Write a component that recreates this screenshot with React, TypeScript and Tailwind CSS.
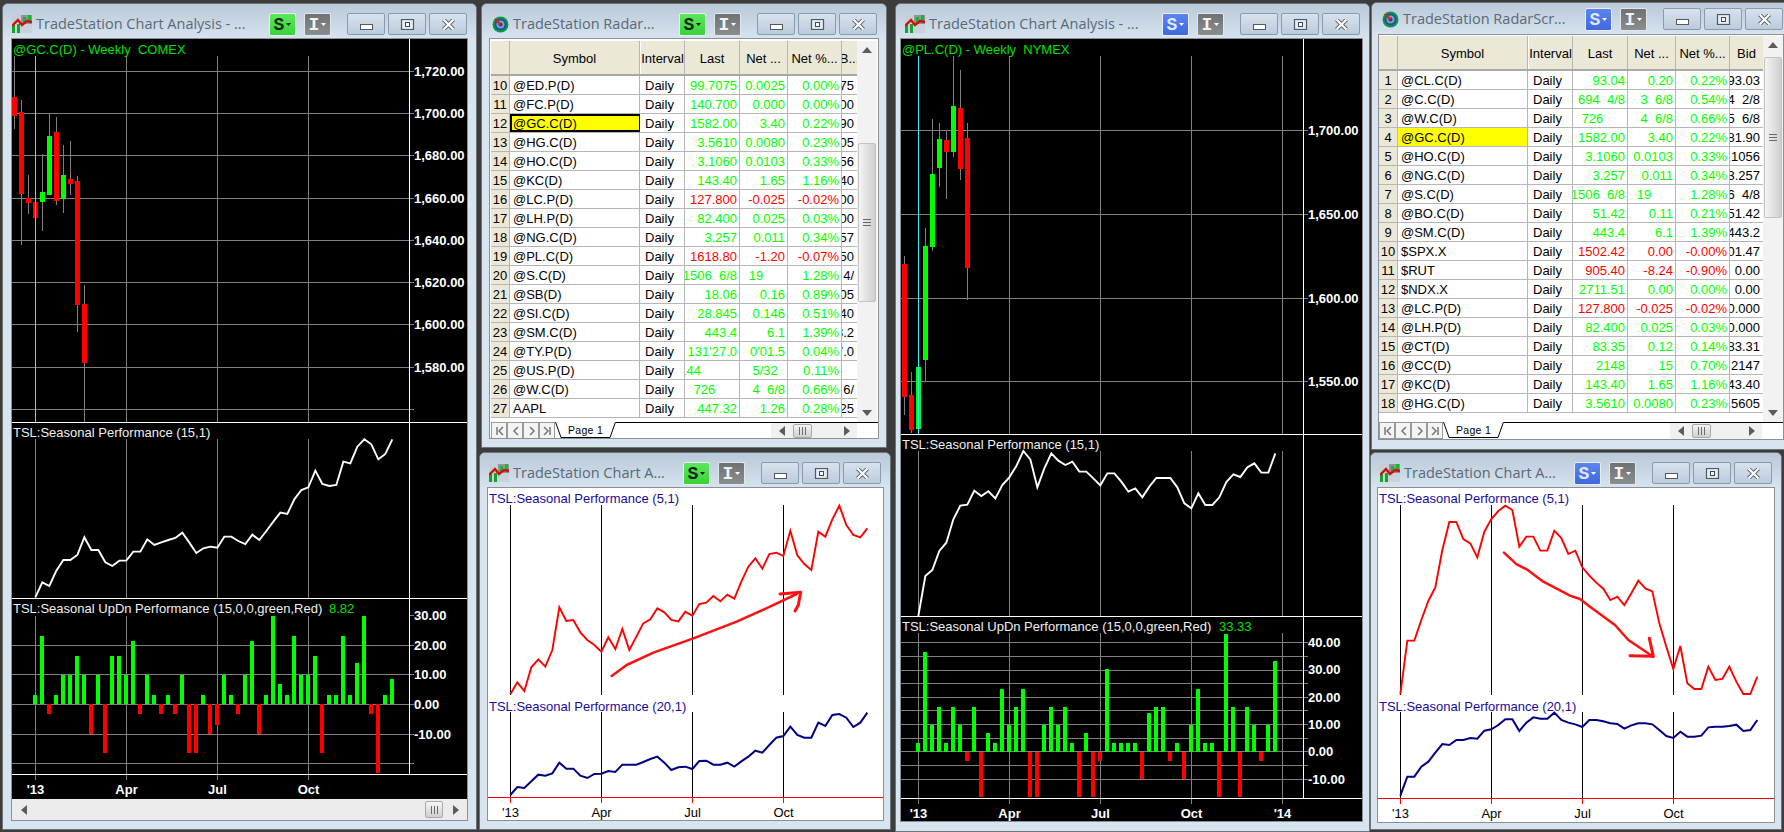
import React from 'react';

type Row = [string, string, string, string, string, string];
type Candle = [number, number, number, number, number, 'r' | 'g'];

const series = (ys: number[], start: number, ox: number, oy: number) =>
  ys.map((y, i) => `${ox + (start + i * 21) / 3},${oy + y / 3}`).join(' ');
const pts = (p: number[][], ox: number, oy: number) => p.map(([x, y]) => `${ox + x / 3},${oy + y / 3}`).join(' ');

const GRID = '#808080';

function ChartIcon() {
  return (
    <svg width="20" height="18" viewBox="0 0 20 18" className="shrink-0">
      <rect x="0" y="0" width="20" height="18" fill="#c4ccd0" opacity="0.6" />
      <rect x="9" y="0" width="11" height="9" fill="#8f9496" />
      <rect x="0" y="10" width="3" height="8" fill="#11a52a" />
      <rect x="5" y="9" width="3" height="9" fill="#11a52a" />
      <rect x="11" y="2" width="3" height="7" fill="#18b535" />
      <rect x="16" y="0" width="3" height="8" fill="#18b535" />
      <polyline points="0,11 6,5 10,10 15,6 20,7" fill="none" stroke="#d01010" strokeWidth="2.4" />
    </svg>
  );
}

function RadarIcon() {
  return (
    <svg width="17" height="17" viewBox="0 0 17 17" className="ml-[1px] shrink-0">
      <circle cx="8.5" cy="8.5" r="8" fill="#0f9a3a" />
      <circle cx="8.5" cy="8.5" r="6" fill="#1a4fb0" />
      <circle cx="8.5" cy="8.5" r="4" fill="#7f9fb8" />
      <circle cx="8.5" cy="8.5" r="2" fill="#24406f" />
      <line x1="3" y1="3" x2="9" y2="9" stroke="#d82020" strokeWidth="2" />
    </svg>
  );
}

function TitleButtons({ s }: { s: 'green' | 'blue' }) {
  return (
    <div className="flex items-start shrink-0">
      <div
        className={
          'flex h-[23px] w-[27px] items-center justify-center gap-[2px] rounded-[2px] border border-[#e8eef4] ' +
          (s === 'green'
            ? 'bg-linear-to-b from-[#5ae85a] to-[#36d436] text-[#16261a]'
            : 'bg-linear-to-b from-[#5b86ee] to-[#3f68e0] text-[#dfe8ff]')
        }
      >
        <span className="font-['Liberation_Mono'] text-[18px] font-bold leading-none">S</span>
        <svg width="5" height="3" viewBox="0 0 5 3"><polygon points="0,0 5,0 2.5,3" fill={s === 'green' ? '#102010' : '#ffffff'} /></svg>
      </div>
      <div className="ml-[8px] flex h-[23px] w-[27px] items-center justify-center gap-[2px] rounded-[2px] border border-[#e0e6ec] bg-linear-to-b from-[#6f7272] to-[#8b8e8e] text-[#f2f2f2]">
        <span className="font-['Liberation_Mono'] text-[18px] font-bold leading-none">I</span>
        <svg width="5" height="3" viewBox="0 0 5 3"><polygon points="0,0 5,0 2.5,3" fill="#ffffff" /></svg>
      </div>
      <div className="ml-[16px] flex gap-[3px]">
        <WinBtn>
          <rect x="1.5" y="5.5" width="12" height="5" fill="#fff" stroke="#4e5a66" />
        </WinBtn>
        <WinBtn>
          <rect x="1.5" y="0.5" width="12" height="10" fill="#e4ecf4" stroke="#4e5a66" strokeWidth="1.2" />
          <rect x="5.5" y="3.5" width="4" height="4" fill="#fff" stroke="#3e4a56" strokeWidth="1" />
        </WinBtn>
        <WinBtn>
          <path d="M2.5 0.5 L12.5 10.5 M12.5 0.5 L2.5 10.5" stroke="#55606c" strokeWidth="4" />
          <path d="M2.5 0.5 L12.5 10.5 M12.5 0.5 L2.5 10.5" stroke="#ffffff" strokeWidth="2.2" />
        </WinBtn>
      </div>
    </div>
  );
}

function WinBtn({ children }: { children: React.ReactNode }) {
  return (
    <div className="flex h-[22px] w-[38px] items-center justify-center rounded-[2px] border border-[#8a9bb0] bg-linear-to-b from-[#d7e2ee] to-[#bccbdb]">
      <svg width="15" height="11" viewBox="0 0 15 11">{children}</svg>
    </div>
  );
}

function Win({
  pos,
  title,
  icon,
  s,
  bar = 'h-[34px] pt-[9px]',
  clientBox,
  children,
}: {
  pos: string;
  title: string;
  icon: React.ReactNode;
  s: 'green' | 'blue';
  bar?: string;
  clientBox: string;
  children: React.ReactNode;
}) {
  return (
    <div className={'absolute flex flex-col rounded-t-[6px] border border-[#6e7377] bg-[#d8e5f1] ' + pos}>
      <div className={'flex shrink-0 items-start rounded-t-[5px] bg-linear-to-b from-[#bac9d8] to-[#d6e3ef] pr-[9px] ' + bar}>
        <div className="flex min-w-0 flex-1 items-center gap-[4px] pl-[9px]">
          {icon}
          <span className="font-['Open_Sans'] whitespace-nowrap text-[14.5px] leading-[22px] text-[#5a6976]">{title}</span>
        </div>
        <TitleButtons s={s} />
      </div>
      <div className={'flex flex-col overflow-hidden border border-[#8b9097] ' + clientBox}>{children}</div>
    </div>
  );
}

function Candles({ data }: { data: Candle[] }) {
  return (
    <g shapeRendering="crispEdges">
      {data.map(([cx, wt, wb, bt, bb, c], i) => (
        <g key={i}>
          <rect x={Math.floor(cx)} y={wt} width="1" height={wb - wt} fill={GRID} />
          <rect x={Math.floor(cx) - 2} y={bt} width="5" height={bb - bt} fill={c === 'r' ? '#ff0000' : '#00ff00'} />
        </g>
      ))}
    </g>
  );
}

function Txt({ x, y, children, fill = '#fff', bold, anchor }: { x: number; y: number; children: React.ReactNode; fill?: string; bold?: boolean; anchor?: 'middle' }) {
  return (
    <text x={x} y={y + 4.5} fill={fill} fontSize="13" fontWeight={bold ? 700 : 400} textAnchor={anchor} xmlSpace="preserve">
      {children}
    </text>
  );
}

function DarkChart(p: {
  box: [number, number, number, number];
  axis: number;
  seps: [number, number, number];
  vx: number[];
  cyan: number;
  top2: number;
  top3: number;
  priceLines: number[];
  priceLabels: [string, number][];
  labelX: number;
  candles: Candle[];
  legend: string;
  line: string;
  legend2Y: number;
  legend3Y: number;
  valX: number;
  val: string;
  bars: number[];
  zero: number;
  bx: number;
  ox: number;
  oy: number;
  barLines: number[];
  barTicks: number[];
  barLabels: [string, number][];
  dates: [string, number][];
  dateY: number;
}) {
  const [x, y, w, h] = p.box;
  const [s1, s2, s3] = p.seps;
  return (
    <svg width={w} height={h} viewBox={`${x} ${y} ${w} ${h}`} className="block shrink-0 bg-black">
      <g shapeRendering="crispEdges" stroke={GRID} strokeWidth="1">
        {p.vx.map((v) => (
          <line key={'a' + v} x1={v} x2={v} y1={56} y2={s1} />
        ))}
        {p.vx.map((v) => (
          <line key={'b' + v} x1={v} x2={v} y1={p.top2} y2={s2} />
        ))}
        {p.vx.map((v) => (
          <line key={'c' + v} x1={v} x2={v} y1={p.top3} y2={s3 + 5} />
        ))}
        <line x1={p.cyan} x2={p.cyan} y1={p.top2} y2={s2} />
        <line x1={p.cyan} x2={p.cyan} y1={p.top3} y2={s3 + 5} />
        {p.priceLines.map((v) => (
          <line key={'p' + v} x1={x} x2={p.axis + 4} y1={v} y2={v} />
        ))}
        {p.barLines.map((v) => (
          <line key={'l' + v} x1={x} x2={p.axis + 4} y1={v} y2={v} />
        ))}
        {p.barTicks.map((v) => (
          <line key={'t' + v} x1={p.axis} x2={p.axis + 4} y1={v} y2={v} />
        ))}
      </g>
      <Candles data={p.candles} />
      <line x1={p.cyan} x2={p.cyan} y1={56} y2={s1} stroke="#30f0f8" strokeWidth="1" shapeRendering="crispEdges" />
      <polyline points={p.line} fill="none" stroke="#ffffff" strokeWidth="1.9" />
      <g shapeRendering="crispEdges">
        {p.bars.map((b, i) => {
          const bx = p.ox + (p.bx + i * 21) / 3 - 2;
          const a = p.oy + p.zero / 3;
          const e = p.oy + b / 3;
          return <rect key={i} x={Math.round(bx)} y={Math.min(a, e)} width="4" height={Math.abs(a - e)} fill={b < p.zero ? '#00ff00' : '#ff0000'} />;
        })}
      </g>
      <g shapeRendering="crispEdges" stroke="#ffffff" strokeWidth="1">
        <line x1={p.axis} x2={p.axis} y1={y} y2={s3} />
        <line x1={x} x2={x + w} y1={s1} y2={s1} />
        <line x1={x} x2={x + w} y1={s2} y2={s2} />
        <line x1={x} x2={x + w} y1={s3} y2={s3} />
      </g>
      <Txt x={x + 1} y={49} fill="#00e000">{p.legend}</Txt>
      <Txt x={x + 1} y={p.legend2Y} fill="#f0f0f0">TSL:Seasonal Performance (15,1)</Txt>
      <Txt x={x + 1} y={p.legend3Y} fill="#f0f0f0">TSL:Seasonal UpDn Performance (15,0,0,green,Red)</Txt>
      <Txt x={p.valX} y={p.legend3Y} fill="#00e000">{p.val}</Txt>
      {p.priceLabels.map(([t, v]) => (
        <Txt key={t} x={p.labelX} y={v} bold>{t}</Txt>
      ))}
      {p.barLabels.map(([t, v]) => (
        <Txt key={t} x={p.labelX} y={v} bold>{t}</Txt>
      ))}
      {p.dates.map(([t, v]) => (
        <Txt key={t} x={v} y={p.dateY} bold anchor="middle">{t}</Txt>
      ))}
    </svg>
  );
}

function WhiteChart(p: {
  box: [number, number, number, number];
  ox: number;
  oy: number;
  red: number[];
  blue: number[];
  arrow: number[][];
  head: number[][];
  hline: number;
  dateY: number;
}) {
  const [x, y, w, h] = p.box;
  const vx = [91, 364, 637, 910].map((v) => Math.floor(p.ox + v / 3) + 0.5);
  const names = ["'13", 'Apr', 'Jul', 'Oct'];
  const base = p.oy;
  return (
    <svg width={w} height={h} viewBox={`${x} ${y} ${w} ${h}`} className="block bg-white">
      <g shapeRendering="crispEdges" stroke="#000" strokeWidth="1">
        {vx.map((v) => (
          <line key={'a' + v} x1={v} x2={v} y1={base + 55} y2={base + 245} />
        ))}
        {vx.map((v) => (
          <line key={'b' + v} x1={v} x2={v} y1={base + 262} y2={p.hline} />
        ))}
      </g>
      <g shapeRendering="crispEdges" stroke="#ff0000" strokeWidth="1">
        <line x1={x} x2={x + w} y1={p.hline} y2={p.hline} />
        {vx.map((v) => (
          <line key={'c' + v} x1={v} x2={v} y1={p.hline} y2={p.hline + 5} />
        ))}
      </g>
      <polyline points={series(p.red, 91, p.ox, p.oy)} fill="none" stroke="#ff0000" strokeWidth="1.9" />
      <polyline points={series(p.blue, 91, p.ox, p.oy)} fill="none" stroke="#000080" strokeWidth="2" />
      <polyline points={pts(p.arrow, p.ox, p.oy)} fill="none" stroke="#ff1010" strokeWidth="2.5" strokeLinejoin="round" strokeLinecap="round" />
      <polyline points={pts(p.head, p.ox, p.oy)} fill="none" stroke="#ff1010" strokeWidth="3" strokeLinejoin="round" strokeLinecap="round" />
      <Txt x={x + 1} y={base + 48} fill="#1a0a9a">TSL:Seasonal Performance (5,1)</Txt>
      <Txt x={x + 1} y={base + 256} fill="#1a0a9a">TSL:Seasonal Performance (20,1)</Txt>
      {names.map((t, i) => (
        <Txt key={t} x={vx[i]} y={p.dateY} fill="#000" anchor="middle">{t}</Txt>
      ))}
    </svg>
  );
}

const cell = 'flex h-full shrink-0 items-center overflow-hidden whitespace-pre border-r border-[#b6b6b6] pt-[1px]';

function Grid({ rows, lastHead, lastW, selBorder }: { rows: Row[]; lastHead: string; lastW: string; selBorder?: boolean }) {
  return (
    <div className={'flex flex-col text-[13px] leading-none text-black ' + lastW}>
      <div className="flex h-[35px] shrink-0 border-b-2 border-[#a8a8a8] bg-[#ebe8d8]">
        <div className={cell + ' w-[19px]'} />
        <div className={cell + ' w-[130px] justify-center'}>Symbol</div>
        <div className={cell + ' w-[45px] justify-center border-l border-l-white'}>Interval</div>
        <div className={cell + ' w-[55px] justify-center'}>Last</div>
        <div className={cell + ' w-[48px] justify-center'}>Net ...</div>
        <div className={cell + ' w-[54px] justify-center'}>Net %...</div>
        <div className="flex min-w-0 flex-1 items-center justify-center overflow-hidden whitespace-pre pt-[1px]">{lastHead}</div>
      </div>
      {rows.map((r) => {
        const col = r[4].startsWith('-') ? 'text-[#ff0000]' : 'text-[#00ff00]';
        const selected = r[1] === '@GC.C(D)';
        const bordered = selected && selBorder;
        return (
          <div key={r[0]} className="flex h-[19px] shrink-0 border-b border-[#b6b6b6]">
            <div className={cell + ' w-[19px] justify-center bg-[#ebe8d8]'}>{r[0]}</div>
            <div
              className={
                cell +
                ' w-[130px] ' +
                (selected ? 'bg-[#ffff00] ' : '') +
                (bordered ? 'border-2 border-black pl-[1px]' : 'pl-[3px]')
              }
            >
              {r[1]}
            </div>
            <div className={cell + ' w-[45px] pl-[5px]'}>Daily</div>
            <div className={cell + ' w-[55px] justify-end pr-[2px] ' + col}><span className="shrink-0">{r[2]}</span></div>
            <div className={cell + ' w-[48px] justify-end pr-[2px] ' + col}><span className="shrink-0">{r[3]}</span></div>
            <div className={cell + ' w-[54px] justify-end pr-[2px] ' + col}><span className="shrink-0">{r[4]}</span></div>
            <div className="flex min-w-0 flex-1 items-center justify-end overflow-hidden whitespace-pre pr-[3px] pt-[1px]"><span className="shrink-0">{r[5]}</span></div>
          </div>
        );
      })}
    </div>
  );
}

function Tri({ d }: { d: 'u' | 'd' | 'l' | 'r' }) {
  const p = { u: '0,6 10,6 5,0', d: '0,0 10,0 5,6', l: '6,0 6,10 0,5', r: '0,0 0,10 6,5' }[d];
  const horizontal = d === 'l' || d === 'r';
  return (
    <svg width={horizontal ? 6 : 10} height={horizontal ? 10 : 6} viewBox={horizontal ? '0 0 6 10' : '0 0 10 6'} className="shrink-0">
      <polygon points={p} fill="#5c5c5c" />
    </svg>
  );
}

function Grip({ vertical }: { vertical?: boolean }) {
  return (
    <svg width={vertical ? 8 : 9} height={vertical ? 9 : 8} viewBox={vertical ? '0 0 8 9' : '0 0 9 8'}>
      {[0.5, 3.5, 6.5].map((v) =>
        vertical ? (
          <line key={v} x1="0" x2="8" y1={v + 1} y2={v + 1} stroke="#6a6a6a" />
        ) : (
          <line key={v} y1="0" y2="8" x1={v + 1} x2={v + 1} stroke="#6a6a6a" />
        ),
      )}
    </svg>
  );
}

function VScroll({ gap, thumb }: { gap: string; thumb: string }) {
  return (
    <div className="flex w-[20px] shrink-0 flex-col items-center bg-[#f2f2f2]">
      <div className="flex h-[18px] w-full shrink-0 items-center justify-center"><Tri d="u" /></div>
      <div className={'shrink-0 ' + gap} />
      <div className={'flex w-[18px] shrink-0 items-center justify-center rounded-[2px] border border-[#c2c2c2] bg-linear-to-r from-[#f4f4f4] to-[#cfcfcf] ' + thumb}>
        <Grip vertical />
      </div>
      <div className="flex-1" />
      <div className="flex h-[18px] w-full shrink-0 items-center justify-center"><Tri d="d" /></div>
    </div>
  );
}

function TabStrip({ scrollW }: { scrollW: string }) {
  return (
    <div className="flex h-[17px] shrink-0 bg-white">
      {['M4 2v8M10 2L6 6l4 4', 'M9 2L5 6l4 4', 'M5 2l4 4-4 4', 'M3 2l4 4-4 4M9 2v8'].map((d) => (
        <div key={d} className="flex h-full w-[16px] items-center justify-center border border-[#9a9a9a] bg-[#f4f4f4]">
          <svg width="12" height="12" viewBox="0 0 12 12"><path d={d} fill="none" stroke="#777" strokeWidth="1.5" /></svg>
        </div>
      ))}
      <div className="relative flex h-full w-[61px] shrink-0 items-center justify-center text-[10.5px] leading-none text-black">
        <svg width="61" height="17" viewBox="0 0 61 17" className="absolute left-0 top-0">
          <path d="M0.5 0 L6 15.5 H55 L60.5 0" fill="#fff" stroke="#000" />
        </svg>
        <span className="relative tracking-[0.3px]">Page 1</span>
      </div>
      <div className="flex-1 border-t border-black" />
      <div className={'flex h-full shrink-0 items-center border-t border-black bg-[#f0f0f0] pl-[8px] ' + scrollW}>
        <Tri d="l" />
        <div className="ml-[8px] flex h-[14px] w-[19px] items-center justify-center rounded-[2px] border border-[#aaa] bg-linear-to-b from-[#f6f6f6] to-[#cfcfcf]"><Grip /></div>
        <div className="flex-1" />
        <Tri d="r" />
        <div className="w-[7px]" />
      </div>
      <div className="w-[21px] shrink-0 border-t border-black bg-white" />
    </div>
  );
}

const rows2: Row[] = [
  ['10', '@ED.P(D)', '99.7075', '0.0025', '0.00%', '99.7075'],
  ['11', '@FC.P(D)', '140.700', '0.000', '0.00%', '140.700'],
  ['12', '@GC.C(D)', '1582.00', '3.40', '0.22%', '1581.90'],
  ['13', '@HG.C(D)', '3.5610', '0.0080', '0.23%', '3.5605'],
  ['14', '@HO.C(D)', '3.1060', '0.0103', '0.33%', '3.1056'],
  ['15', '@KC(D)', '143.40', '1.65', '1.16%', '143.40'],
  ['16', '@LC.P(D)', '127.800', '-0.025', '-0.02%', '127.800'],
  ['17', '@LH.P(D)', '82.400', '0.025', '0.03%', '82.000'],
  ['18', '@NG.C(D)', '3.257', '0.011', '0.34%', '3.257'],
  ['19', '@PL.C(D)', '1618.80', '-1.20', '-0.07%', '1618.50'],
  ['20', '@S.C(D)', '1506  6/8', '19      ', '1.28%', '1506 4/'],
  ['21', '@SB(D)', '18.06', '0.16', '0.89%', '18.05'],
  ['22', '@SI.C(D)', '28.845', '0.146', '0.51%', '28.840'],
  ['23', '@SM.C(D)', '443.4', '6.1', '1.39%', '443.2'],
  ['24', '@TY.P(D)', "131'27.0", "0'01.5", '0.04%', "131'27.0"],
  ['25', '@US.P(D)', '144          ', '5/32  ', '0.11%', ''],
  ['26', '@W.C(D)', '726      ', '4  6/8', '0.66%', '726 6/'],
  ['27', 'AAPL', '447.32', '1.26', '0.28%', '447.25'],
];

const rows5: Row[] = [
  ['1', '@CL.C(D)', '93.04', '0.20', '0.22%', '93.03'],
  ['2', '@C.C(D)', '694  4/8', '3  6/8', '0.54%', '694  2/8'],
  ['3', '@W.C(D)', '726      ', '4  6/8', '0.66%', '725  6/8'],
  ['4', '@GC.C(D)', '1582.00', '3.40', '0.22%', '1581.90'],
  ['5', '@HO.C(D)', '3.1060', '0.0103', '0.33%', '3.1056'],
  ['6', '@NG.C(D)', '3.257', '0.011', '0.34%', '3.257'],
  ['7', '@S.C(D)', '1506  6/8', '19      ', '1.28%', '1506  4/8'],
  ['8', '@BO.C(D)', '51.42', '0.11', '0.21%', '51.42'],
  ['9', '@SM.C(D)', '443.4', '6.1', '1.39%', '443.2'],
  ['10', '$SPX.X', '1502.42', '0.00', '-0.00%', '1501.47'],
  ['11', '$RUT', '905.40', '-8.24', '-0.90%', '0.00'],
  ['12', '$NDX.X', '2711.51', '0.00', '0.00%', '0.00'],
  ['13', '@LC.P(D)', '127.800', '-0.025', '-0.02%', '0.000'],
  ['14', '@LH.P(D)', '82.400', '0.025', '0.03%', '0.000'],
  ['15', '@CT(D)', '83.35', '0.12', '0.14%', '83.31'],
  ['16', '@CC(D)', '2148', '15', '0.70%', '2147'],
  ['17', '@KC(D)', '143.40', '1.65', '1.16%', '143.40'],
  ['18', '@HG.C(D)', '3.5610', '0.0080', '0.23%', '3.5605'],
];

const candles1: Candle[] = [
  [14.5, 56, 129, 97, 116, 'r'],
  [21.5, 100, 245, 112, 194, 'r'],
  [28.5, 175, 214, 198, 203, 'r'],
  [35.5, 192, 218, 202, 218, 'r'],
  [42.5, 154, 231, 192, 202, 'g'],
  [49.5, 114, 195, 136, 195, 'g'],
  [56.5, 117, 205, 132, 201, 'r'],
  [63.5, 145, 213, 175, 199, 'g'],
  [70.5, 141, 195, 179, 184, 'r'],
  [77.5, 176, 332, 181, 305, 'r'],
  [84.5, 285, 422, 304, 363, 'r'],
];
const line1 = [592, 547, 558, 512, 480, 480, 465, 412, 450, 450, 487, 498, 482, 482, 455, 455, 418, 435, 427, 420, 414, 398, 428, 459, 445, 440, 443, 410, 410, 423, 432, 404, 420, 393, 365, 338, 342, 298, 270, 262, 212, 252, 258, 255, 185, 190, 140, 118, 133, 178, 162, 118];
const bars1 = [885, 708, 942, 885, 825, 825, 768, 825, 1002, 825, 1058, 768, 768, 825, 723, 942, 825, 885, 942, 885, 942, 825, 1058, 1058, 885, 1002, 975, 825, 885, 942, 825, 723, 1002, 885, 648, 852, 885, 708, 825, 825, 768, 1058, 885, 885, 708, 885, 790, 648, 942, 1118, 885, 838];

const z4 = (v: number) => 895 + v / 3;
const t4 = (v: number) => v / 3;
const candles4: Candle[] = (
  [
    [29, 768, 1245, 792, 1190, 'r'],
    [50, 1115, 1298, 1186, 1290, 'r'],
    [71, 1100, 1290, 1101, 1287, 'g'],
    [92, 684, 1143, 738, 1080, 'g'],
    [113, 357, 753, 522, 741, 'g'],
    [134, 369, 561, 417, 504, 'g'],
    [155, 393, 597, 420, 456, 'r'],
    [176, 168, 471, 318, 456, 'g'],
    [197, 210, 540, 324, 507, 'r'],
    [218, 369, 900, 414, 804, 'r'],
  ] as [number, number, number, number, number, 'r' | 'g'][]
).map(([x, a, b, c, d, k]) => [z4(x), t4(a), t4(b), t4(c), t4(d), k] as Candle);
const line4 = [588, 468, 450, 393, 368, 298, 257, 254, 212, 228, 214, 235, 195, 172, 138, 93, 118, 202, 145, 100, 122, 135, 125, 155, 155, 175, 196, 160, 160, 185, 215, 205, 232, 200, 174, 174, 174, 202, 250, 265, 220, 255, 255, 232, 186, 163, 171, 142, 130, 158, 158, 100];
const bars4 = [968, 695, 914, 860, 968, 860, 914, 1023, 860, 1130, 938, 968, 806, 914, 860, 806, 1130, 1130, 914, 860, 914, 860, 968, 1130, 938, 1130, 1023, 748, 968, 968, 968, 968, 1077, 878, 860, 860, 1023, 968, 1077, 914, 806, 968, 968, 1130, 642, 860, 1130, 860, 914, 1023, 914, 723];

const red3 = [733, 697, 723, 652, 628, 650, 600, 472, 513, 510, 547, 570, 585, 605, 562, 597, 537, 600, 560, 520, 508, 475, 487, 510, 514, 485, 497, 462, 458, 438, 454, 434, 446, 395, 350, 325, 356, 312, 308, 318, 242, 316, 342, 360, 245, 260, 208, 167, 225, 255, 262, 235];
const blue3 = [1035, 1011, 1014, 994, 974, 977, 970, 938, 956, 956, 977, 984, 972, 971, 963, 966, 944, 944, 944, 936, 927, 920, 938, 960, 952, 950, 957, 933, 932, 944, 944, 938, 950, 934, 920, 902, 908, 885, 863, 858, 830, 855, 863, 863, 818, 828, 795, 792, 803, 831, 818, 788];
const red6 = [733, 572, 572, 510, 453, 412, 300, 216, 216, 267, 280, 322, 245, 207, 183, 167, 180, 290, 260, 260, 302, 302, 242, 264, 312, 302, 352, 377, 398, 416, 450, 440, 465, 430, 392, 415, 424, 520, 590, 657, 588, 700, 717, 717, 650, 690, 687, 650, 695, 732, 732, 680];
const blue6 = [1037, 980, 980, 950, 935, 908, 882, 885, 870, 870, 864, 866, 842, 838, 825, 808, 808, 843, 818, 802, 806, 806, 788, 810, 818, 823, 831, 810, 810, 814, 820, 822, 836, 826, 820, 820, 823, 840, 858, 864, 845, 860, 860, 857, 832, 830, 830, 828, 824, 843, 840, 810];

export default function App() {
  return (
    <div className="relative h-[832px] w-[1784px] overflow-hidden bg-[#3c3c3c] font-['Liberation_Sans',sans-serif]">
      <Win pos="left-[2px] top-[3px] h-[827px] w-[475px]" title="TradeStation Chart Analysis - ..." icon={<ChartIcon />} s="green" clientBox="ml-[8px] w-[457px] h-[783px]">
        <DarkChart
          box={[12, 39, 455, 760]}
          axis={409.5}
          seps={[422.5, 598.5, 774.5]}
          vx={[126.5, 217.5, 308.5]}
          cyan={35.5}
          top2={439}
          top3={616}
          priceLines={[71.5, 113.5, 155.5, 198.5, 240.5, 282.5, 324.5, 367.5, 409.5]}
          priceLabels={[['1,720.00', 71], ['1,700.00', 113], ['1,680.00', 155], ['1,660.00', 198], ['1,640.00', 240], ['1,620.00', 282], ['1,600.00', 324], ['1,580.00', 367]]}
          labelX={414}
          candles={candles1}
          legend="@GC.C(D) - Weekly  COMEX"
          line={series(line1, 106, 0, 400)}
          legend2Y={432}
          legend3Y={608}
          valX={329}
          val="8.82"
          bars={bars1}
          zero={913}
          bx={106}
          ox={0}
          oy={400}
          barLines={[645.5, 674.5, 704.5, 734.5, 763.5]}
          barTicks={[615.5]}
          barLabels={[['30.00', 615], ['20.00', 645], ['10.00', 674], ['0.00', 704], ['-10.00', 734]]}
          dates={[["'13", 35.5], ['Apr', 126.5], ['Jul', 217.5], ['Oct', 308.5]]}
          dateY={789}
        />
        <div className="flex h-[21px] shrink-0 items-center bg-[#ececec] pl-[9px] pr-[8px]">
          <Tri d="l" />
          <div className="flex-1" />
          <div className="flex h-[17px] w-[18px] items-center justify-center rounded-[2px] border border-[#aaa] bg-linear-to-b from-[#f6f6f6] to-[#cfcfcf]"><Grip /></div>
          <div className="w-[10px]" />
          <Tri d="r" />
        </div>
      </Win>

      <Win pos="left-[481px] top-[3px] h-[445px] w-[406px]" title="TradeStation Radar..." icon={<RadarIcon />} s="green" clientBox="ml-[7px] h-[401px] w-[390px] bg-white pl-[1px] pt-[2px]">
        <div className="flex h-[381px] shrink-0">
          <Grid rows={rows2} lastHead="B..." lastW="w-[366px]" selBorder />
          <VScroll gap="h-[84px]" thumb="h-[159px]" />
        </div>
        <TabStrip scrollW="w-[86px]" />
      </Win>

      <Win pos="left-[479px] top-[452px] h-[378px] w-[412px]" title="TradeStation Chart A..." icon={<ChartIcon />} s="green" clientBox="ml-[7px] h-[334px] w-[397px]">
        <WhiteChart box={[488, 488, 395, 332]} ox={480} oy={450} red={red3} blue={blue3} arrow={[[395, 678], [440, 645], [520, 608], [640, 565], [770, 515], [870, 470], [950, 432]]} head={[[900, 432], [962, 427], [955, 465], [945, 483]]} hline={797.5} dateY={812} />
      </Win>

      <Win pos="left-[895px] top-[3px] h-[829px] w-[475px]" title="TradeStation Chart Analysis - ..." icon={<ChartIcon />} s="blue" clientBox="ml-[4px] h-[784px] w-[463px]">
        <DarkChart
          box={[901, 39, 461, 782]}
          axis={1303.5}
          seps={[434.5, 616.5, 798.5]}
          vx={[1009.5, 1100.5, 1191.5, 1282.5]}
          cyan={918.5}
          top2={451}
          top3={633}
          priceLines={[130.5, 214.5, 298.5, 381.5]}
          priceLabels={[['1,700.00', 130], ['1,650.00', 214], ['1,600.00', 298], ['1,550.00', 381]]}
          labelX={1308}
          candles={candles4}
          legend="@PL.C(D) - Weekly  NYMEX"
          line={series(line4, 70, 895, 420)}
          legend2Y={444}
          legend3Y={626}
          valX={1219}
          val="33.33"
          bars={bars4}
          zero={995}
          bx={70}
          ox={895}
          oy={420}
          barLines={[642.5, 656.5, 670.5, 683.5, 697.5, 710.5, 724.5, 738.5, 751.5, 765.5, 779.5]}
          barTicks={[]}
          barLabels={[['40.00', 642], ['30.00', 669], ['20.00', 697], ['10.00', 724], ['0.00', 751], ['-10.00', 779]]}
          dates={[["'13", 918.5], ['Apr', 1009.5], ['Jul', 1100.5], ['Oct', 1191.5], ["'14", 1282.5]]}
          dateY={813}
        />
      </Win>

      <Win pos="left-[1371px] top-[2px] h-[448px] w-[422px]" title="TradeStation RadarScr..." icon={<RadarIcon />} s="blue" bar="h-[31px] pt-[5px]" clientBox="ml-[6px] h-[406px] w-[406px] bg-white pl-0 pt-[1px]">
        <div className="flex h-[386px] shrink-0">
          <Grid rows={rows5} lastHead="Bid" lastW="w-[384px]" />
          <VScroll gap="h-[3px]" thumb="h-[161px]" />
        </div>
        <TabStrip scrollW="w-[92px]" />
      </Win>

      <Win pos="left-[1370px] top-[452px] h-[378px] w-[412px]" title="TradeStation Chart A..." icon={<ChartIcon />} s="blue" clientBox="ml-[6px] h-[336px] w-[398px]">
        <WhiteChart box={[1378, 488, 396, 334]} ox={1370} oy={450} red={red6} blue={blue6} arrow={[[402, 308], [440, 343], [470, 358], [520, 395], [600, 437], [630, 447], [660, 470], [735, 525], [775, 570], [850, 620]]} head={[[780, 617], [850, 619], [838, 565]]} hline={798.5} dateY={813} />
      </Win>
    </div>
  );
}
